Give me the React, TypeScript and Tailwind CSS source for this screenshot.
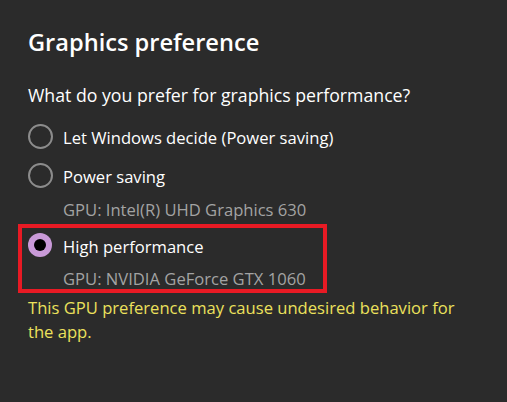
function Radio({ checked = false }: { checked?: boolean }) {
  if (checked) {
    return (
      <span className="mb-[4px] flex h-[24px] w-[24px] shrink-0 items-center justify-center rounded-full bg-[#c99ad8]">
        <span className="h-[12px] w-[12px] rounded-full bg-black" />
      </span>
    );
  }
  return (
    <span className="mb-[4px] h-[25px] w-[25px] shrink-0 rounded-full border-2 border-[#8c8c8c]" />
  );
}

export default function App() {
  return (
    <div
      className="h-[402px] w-[507px] overflow-hidden bg-[#2b2b2b] pl-[28px] pt-[24px] text-white"
      style={{ fontFamily: '"Open Sans", "Noto Sans", sans-serif' }}
    >
      <h1 className="text-[23.6px] font-semibold leading-[36px]">Graphics preference</h1>

      <p className="mt-[23px] text-[17.7px] leading-[24px]">What do you prefer for graphics performance?</p>

      <div className="mt-[18px] flex h-[26px] items-center gap-[10px]">
        <Radio />
        <span className="text-[16.6px] leading-[24px]">Let Windows decide (Power saving)</span>
      </div>

      <div className="mt-[13px] flex h-[26px] items-center gap-[10px]">
        <Radio />
        <span className="text-[16.6px] leading-[24px]">Power saving</span>
      </div>
      <p className="ml-[35px] mt-[8px] text-[16.6px] leading-[24px] text-[#a3a3a3]">GPU: Intel(R) UHD Graphics 630</p>

      <div className="-ml-[10px] mt-[2px] h-[69px] w-[309px] border-4 border-[#e81a24] pl-[6px] pt-[6px]">
        <div className="flex h-[26px] items-center gap-[11px]">
          <Radio checked />
          <span className="text-[16.6px] leading-[24px]">High performance</span>
        </div>
        <p className="ml-[35px] mt-[7px] text-[16.6px] leading-[24px] text-[#a3a3a3]">GPU: NVIDIA GeForce GTX 1060</p>
      </div>

      <p className="mt-[3px] w-[440px] text-[16.6px] leading-[24px] text-[#ece15c]">
        This GPU preference may cause undesired behavior for the app.
      </p>
    </div>
  );
}
